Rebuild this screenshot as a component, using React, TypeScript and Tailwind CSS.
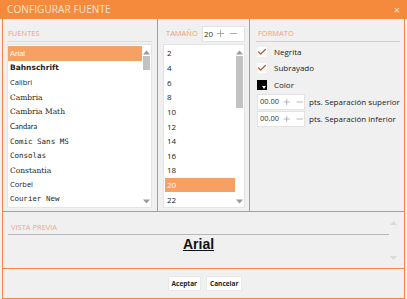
import { Plus, Minus, Check } from 'lucide-react';

const fonts = [
  { name: 'Arial', cls: "font-['Liberation_Sans',sans-serif]" },
  { name: 'Bahnschrift', cls: "font-['DejaVu_Sans',sans-serif] font-semibold" },
  { name: 'Calibri', cls: "font-['Open_Sans',sans-serif]" },
  { name: 'Cambria', cls: "font-['DejaVu_Serif',serif]" },
  { name: 'Cambria Math', cls: "font-['DejaVu_Serif',serif]" },
  { name: 'Candara', cls: "font-['Lato',sans-serif]" },
  { name: 'Comic Sans MS', cls: "font-['DejaVu_Sans_Mono',monospace]" },
  { name: 'Consolas', cls: "font-['DejaVu_Sans_Mono',monospace]" },
  { name: 'Constantia', cls: "font-['DejaVu_Serif',serif]" },
  { name: 'Corbel', cls: "font-['Open_Sans',sans-serif]" },
  { name: 'Courier New', cls: "font-['Liberation_Mono',monospace]" },
];

const sizes = ['2', '4', '6', '8', '10', '12', '14', '16', '18', '20', '22'];

const UpArrow = () => (
  <svg width="7" height="5" viewBox="0 0 7 5"><path d="M0 4.5 L3.5 0.5 L7 4.5 Z" fill="#9a9a9a" /></svg>
);
const DownArrow = () => (
  <svg width="7" height="5" viewBox="0 0 7 5"><path d="M0 0.5 L3.5 4.5 L7 0.5 Z" fill="#9a9a9a" /></svg>
);

const ScrollBar = ({ thumbTop, thumbHeight }: { thumbTop: string; thumbHeight: string }) => (
  <div className="w-[9px] h-full flex flex-col items-center bg-white">
    <div className="h-[10px] flex items-end justify-center"><UpArrow /></div>
    <div className="flex-1 w-full flex flex-col items-center">
      <div className={`w-[7px] bg-[#c2c2c2] ${thumbTop} ${thumbHeight}`} />
    </div>
    <div className="h-[12px] flex items-center justify-center"><DownArrow /></div>
  </div>
);

const Spinner = ({ value, label }: { value: string; label: string }) => (
  <div className="flex items-center h-[17px]">
    <div className="w-[48px] h-[16px] bg-white border border-[#e2e2e2] flex items-center pl-[2px] gap-[3px]">
      <span className="text-[7.5px] text-[#333]">{value}</span>
      <Plus className="w-[10px] h-[10px] text-[#888]" strokeWidth={1.5} />
      <Minus className="w-[10px] h-[10px] text-[#888]" strokeWidth={1.5} />
    </div>
    <span className="ml-[4px] text-[8px] text-[#222]">{label}</span>
  </div>
);

export default function App() {
  return (
    <div className="w-[407px] h-[299px] bg-[#f0f0f0] flex flex-col font-['Open_Sans',sans-serif] overflow-hidden">
      {/* Title bar */}
      <div className="h-[19px] bg-[#f58a3d] flex items-center justify-between pl-[7px] pr-[7px] shrink-0">
        <span className="text-[10px] text-[#fde4d0] tracking-[0.1px]">CONFIGURAR FUENTE</span>
        <span className="text-[11px] text-[#fde4d0] leading-none">×</span>
      </div>

      <div className="flex-1 flex flex-col mx-[2px] border-x border-b border-[#f08a40]">
        {/* Panels */}
        <div className="h-[193px] flex border-b border-[#f08a40]">
          {/* Fuentes */}
          <div className="w-[155px] border-r border-[#f08a40] pl-[4px] pr-[5px] pt-[7px] flex flex-col">
            <div className="h-[16px] flex items-center border-b border-[#dcdcdc] mb-[2px]">
              <span className="text-[7.5px] text-[#f0a07a] pl-[1px]">FUENTES</span>
            </div>
            <div className="h-[164px] bg-white border border-[#e4e4e4] flex">
              <div className="flex-1 flex flex-col pt-[1px]">
                {fonts.map((f, i) => (
                  <div
                    key={f.name}
                    className={`h-[15px] flex items-center pl-[2px] text-[7.5px] ${i === 0 ? 'bg-[#f6a064] text-white' : 'text-[#222]'} ${f.cls}`}
                  >
                    {f.name}
                  </div>
                ))}
              </div>
              <ScrollBar thumbTop="mt-[1px]" thumbHeight="h-[14px]" />
            </div>
          </div>

          {/* Tamaño */}
          <div className="w-[92px] border-r border-[#f08a40] pl-[5px] pr-[4px] pt-[6px] flex flex-col">
            <div className="h-[17px] flex items-center justify-between mb-[2px]">
              <span className="text-[7.5px] text-[#f0a07a] pl-[3px]">TAMAÑO</span>
              <div className="w-[43px] h-[16px] bg-white border border-[#e2e2e2] flex items-center pl-[1px] gap-[2px]">
                <span className="text-[8px] text-[#333]">20</span>
                <Plus className="w-[11px] h-[11px] text-[#888]" strokeWidth={1.5} />
                <Minus className="w-[11px] h-[11px] text-[#888]" strokeWidth={1.5} />
              </div>
            </div>
            <div className="h-[164px] bg-white border border-[#e4e4e4] flex">
              <div className="flex-1 flex flex-col pt-[1px] pl-[1px]">
                {sizes.map((s) => (
                  <div
                    key={s}
                    className={`h-[15px] flex items-center pl-[2px] text-[8px] ${s === '20' ? 'bg-[#f6a064] text-white' : 'text-[#222]'}`}
                  >
                    {s}
                  </div>
                ))}
              </div>
              <ScrollBar thumbTop="mt-[1px]" thumbHeight="h-[52px]" />
            </div>
          </div>

          {/* Formato */}
          <div className="flex-1 pl-[6px] pr-[4px] pt-[7px] flex flex-col">
            <div className="h-[16px] flex items-center border-b border-[#d0d0d0] mb-[2px]">
              <span className="text-[7.5px] text-[#f0a07a] pl-[2px]">FORMATO</span>
            </div>
            <div className="flex flex-col pl-[1px]">
              <div className="h-[16px] flex items-center">
                <div className="w-[10px] h-[10px] bg-white flex items-center justify-center">
                  <Check className="w-[10px] h-[10px] text-[#b5562a]" strokeWidth={3} />
                </div>
                <span className="ml-[7px] text-[8px] text-[#222]">Negrita</span>
              </div>
              <div className="h-[16px] flex items-center">
                <div className="w-[10px] h-[10px] bg-white flex items-center justify-center">
                  <Check className="w-[10px] h-[10px] text-[#b5562a]" strokeWidth={3} />
                </div>
                <span className="ml-[7px] text-[8px] text-[#222]">Subrayado</span>
              </div>
              <div className="h-[17px] flex items-center">
                <div className="relative w-[10px] h-[10px] bg-black">
                  <span className="absolute right-[1px] bottom-[1px] w-0 h-0 border-l-[2px] border-r-[2px] border-t-[3px] border-l-transparent border-r-transparent border-t-white" />
                </div>
                <span className="ml-[7px] text-[8px] text-[#222]">Color</span>
              </div>
              <Spinner value="00.00" label="pts. Separación superior" />
              <Spinner value="00.00" label="pts. Separación inferior" />
            </div>
          </div>
        </div>

        {/* Vista previa */}
        <div className="h-[57px] border-b border-[#f08a40] flex pl-[5px] pr-[6px]">
          <div className="flex-1 flex flex-col pt-[9px]">
            <div className="h-[14px] flex items-center border-b border-[#b8b8b8]">
              <span className="text-[7.5px] text-[#eea88a] pl-[3px]">VISTA PREVIA</span>
            </div>
            <div className="flex justify-center pt-[1px]">
              <span className="text-[14px] font-bold underline text-[#111] font-['Liberation_Sans',sans-serif] leading-[17px]">Arial</span>
            </div>
          </div>
          <div className="w-[9px] flex flex-col justify-between items-center pt-[9px] pb-[8px]">
            <svg width="7" height="4" viewBox="0 0 7 4"><path d="M0 4 L3.5 0 L7 4 Z" fill="#dadada" /></svg>
            <svg width="7" height="4" viewBox="0 0 7 4"><path d="M0 0 L3.5 4 L7 0 Z" fill="#dadada" /></svg>
          </div>
        </div>

        {/* Botones */}
        <div className="flex-1 flex items-center justify-center gap-[5px] pl-[3px]">
          <button className="h-[15px] px-[3px] bg-white border border-[#e8e8e8] rounded-[1px] text-[6.5px] font-bold text-[#222]">Aceptar</button>
          <button className="h-[15px] px-[3px] bg-white border border-[#e8e8e8] rounded-[1px] text-[6.5px] font-bold text-[#222]">Cancelar</button>
        </div>
      </div>
    </div>
  );
}
